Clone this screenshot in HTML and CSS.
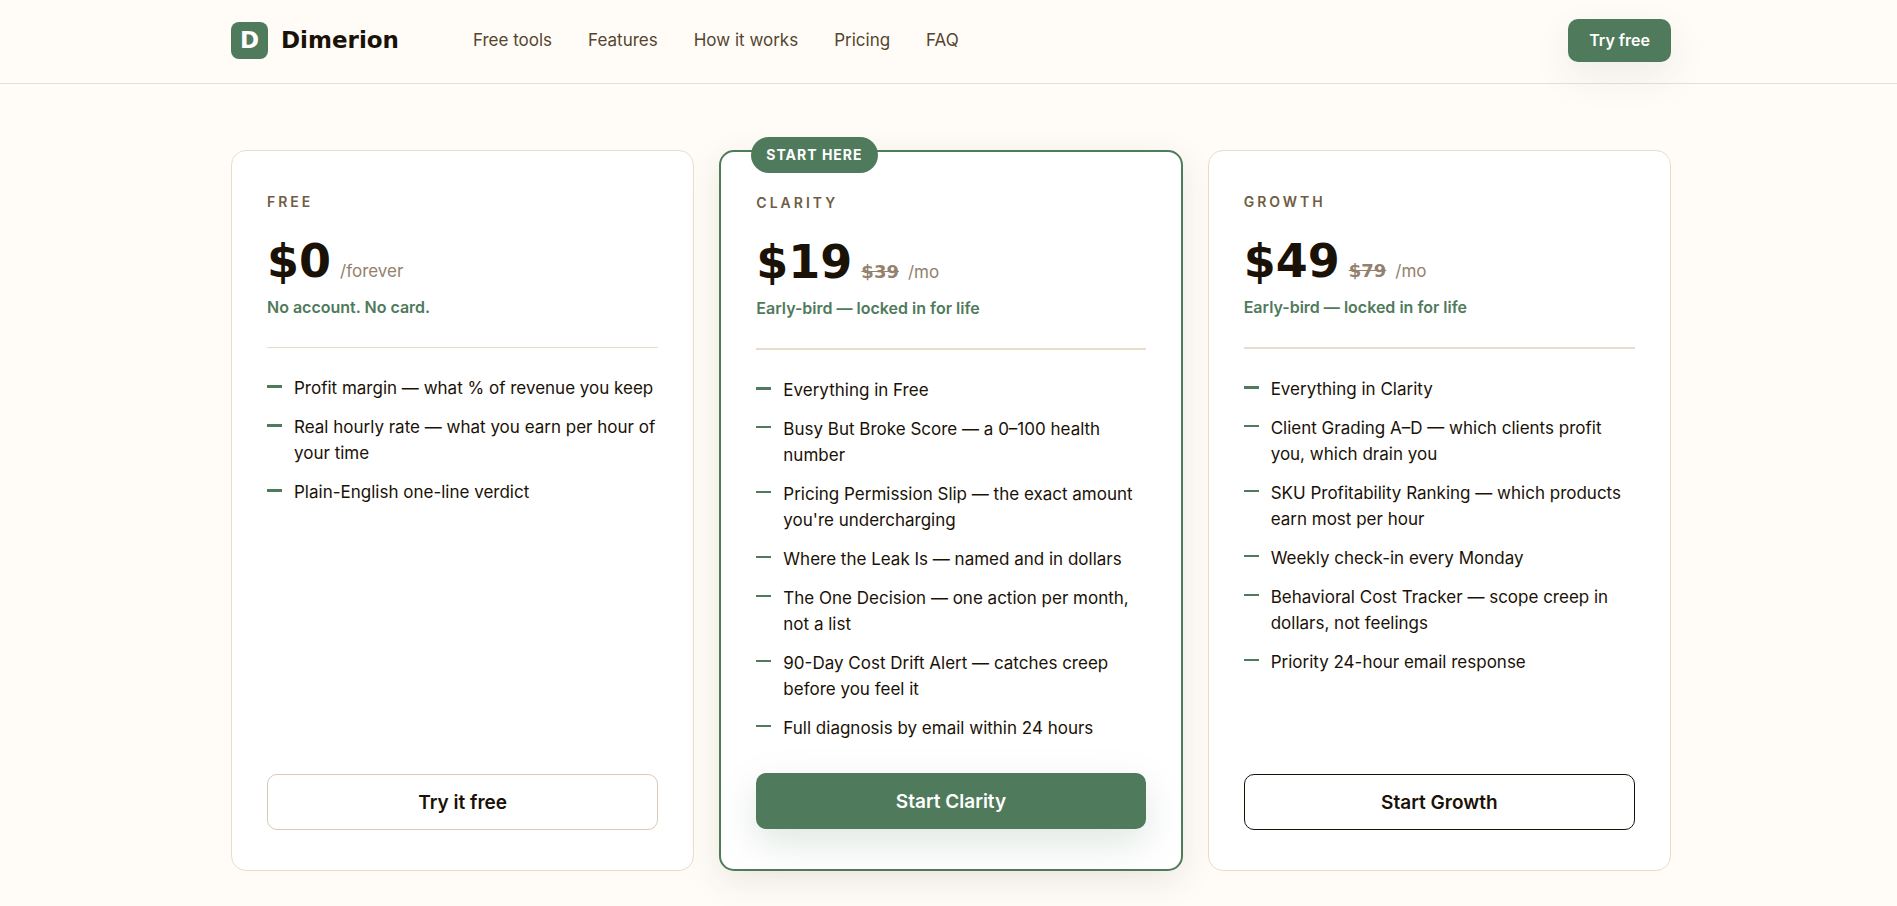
FILE: index.html
```html
<!DOCTYPE html>
<html lang="en">
<head>
    <meta charset="UTF-8">
    <meta name="viewport" content="width=device-width, initial-scale=1.0">
    <title>Dimerion - Pricing</title>
    <link rel="stylesheet" href="styles.css">
</head>
<body>
    <header class="header">
        <div class="container header-inner">
            <a class="logo" href="#">
                <span class="logo-mark" aria-hidden="true">D</span>
                <span class="logo-name">Dimerion</span>
            </a>
            <nav class="nav">
                <a href="#tools">Free tools</a>
                <a href="#features">Features</a>
                <a href="#how">How it works</a>
                <a href="#pricing">Pricing</a>
                <a href="#faq">FAQ</a>
            </nav>
            <button class="btn btn-small btn-primary">Try free</button>
        </div>
    </header>

    <main class="pricing" id="pricing">
        <div class="container plans">
            <section class="plan plan-free">
                <h2 class="plan-name">Free</h2>
                <p class="price"><span class="amount">$0</span><span class="period">/forever</span></p>
                <p class="note">No account. No card.</p>
                <ul class="features">
                    <li>Profit margin — what % of revenue you keep</li>
                    <li>Real hourly rate — what you earn per hour of your time</li>
                    <li>Plain-English one-line verdict</li>
                </ul>
                <button class="btn btn-light">Try it free</button>
            </section>

            <section class="plan plan-featured">
                <span class="badge">Start here</span>
                <h2 class="plan-name">Clarity</h2>
                <p class="price"><span class="amount">$19</span><s class="old">$39</s><span class="period">/mo</span></p>
                <p class="note">Early-bird — locked in for life</p>
                <ul class="features">
                    <li>Everything in Free</li>
                    <li>Busy But Broke Score — a 0–100 health number</li>
                    <li>Pricing Permission Slip — the exact amount you're undercharging</li>
                    <li>Where the Leak Is — named and in dollars</li>
                    <li>The One Decision — one action per month, not a list</li>
                    <li>90-Day Cost Drift Alert — catches creep before you feel it</li>
                    <li>Full diagnosis by email within 24 hours</li>
                </ul>
                <button class="btn btn-primary">Start Clarity</button>
            </section>

            <section class="plan">
                <h2 class="plan-name">Growth</h2>
                <p class="price"><span class="amount">$49</span><s class="old">$79</s><span class="period">/mo</span></p>
                <p class="note">Early-bird — locked in for life</p>
                <ul class="features">
                    <li>Everything in Clarity</li>
                    <li>Client Grading A–D — which clients profit you, which drain you</li>
                    <li>SKU Profitability Ranking — which products earn most per hour</li>
                    <li>Weekly check-in every Monday</li>
                    <li>Behavioral Cost Tracker — scope creep in dollars, not feelings</li>
                    <li>Priority 24-hour email response</li>
                </ul>
                <button class="btn btn-dark">Start Growth</button>
            </section>
        </div>
    </main>
</body>
</html>
```

FILE: styles.css
```css
:root {
    --green: #4f7a5b;
    --ink: #1a1207;
    --brown: #54452f;
    --muted: #93816c;
    --line: #e9dccb;
    --bg: #fffcf7;
    --wide: "DejaVu Sans", sans-serif;
}
* {
    box-sizing: border-box;
}
body {
    margin: 0;
    background: var(--bg);
    color: var(--ink);
    font-family: Inter, "Liberation Sans", sans-serif;
    font-size: 17px;
    line-height: 26px;
}
h2, p, ul {
    margin: 0;
    padding: 0;
}
.container {
    max-width: 1440px;
    margin: 0 auto;
}

/* header */
.header {
    padding: 0 24px 0 29px;
    border-bottom: 1px solid #e5e0d4;
}
.header-inner {
    display: flex;
    align-items: center;
    height: 83px;
    padding-bottom: 3px;
}
.logo {
    display: flex;
    align-items: center;
    gap: 13px;
    color: var(--ink);
    text-decoration: none;
}
.logo-mark {
    display: flex;
    align-items: center;
    justify-content: center;
    width: 37px;
    height: 37px;
    border-radius: 8px;
    background: var(--green);
    color: #fff;
    font: bold 23px/36px var(--wide);
}
.logo-name {
    font: bold 23px/28px var(--wide);
}
.nav {
    display: flex;
    gap: 36px;
    margin-left: 74px;
    margin-right: auto;
}
.nav a {
    color: var(--brown);
    text-decoration: none;
}

/* buttons */
.btn {
    height: 56px;
    border: 1px solid transparent;
    border-radius: 10px;
    background: #fff;
    color: var(--ink);
    font-family: inherit;
    font-size: 19px;
    font-weight: 600;
    cursor: pointer;
}
.btn-light {
    border-color: #d8cbb5;
}
.btn-dark {
    border-color: var(--ink);
}
.btn-primary {
    border: none;
    background: var(--green);
    color: #fff;
    box-shadow: 0 14px 38px rgba(79, 122, 91, 0.18);
}
.btn-small {
    height: 43px;
    padding: 0 21px;
    font-size: 16px;
    box-shadow: 0 14px 38px rgba(40, 50, 40, 0.08);
}

/* plans */
.pricing {
    padding: 66px 24px 35px 29px;
}
.plans {
    display: grid;
    grid-template-columns: repeat(3, 1fr);
    gap: 25px;
}
.plan {
    position: relative;
    display: flex;
    flex-direction: column;
    padding: 40px 35px;
    border: 1px solid var(--line);
    border-radius: 15px;
    background: #fff;
}
.plan-featured {
    border: 2px solid var(--green);
    box-shadow: 0 10px 34px rgba(60, 35, 15, 0.1);
}
.badge {
    position: absolute;
    top: -15px;
    left: 30px;
    padding: 0 15px;
    border-radius: 18px;
    background: var(--green);
    color: #fff;
    font-size: 14px;
    font-weight: 700;
    line-height: 36px;
    letter-spacing: 1px;
    text-transform: uppercase;
}
.plan-name {
    margin-bottom: 26px;
    color: #6f5d43;
    font-size: 14px;
    font-weight: 600;
    line-height: 22px;
    letter-spacing: 3px;
    text-transform: uppercase;
}
.price {
    display: flex;
    align-items: baseline;
    height: 44px;
    gap: 9px;
    margin-bottom: 12px;
    color: var(--muted);
    line-height: 44px;
}
.amount {
    color: var(--ink);
    font: bold 46px/44px var(--wide);
}
.old {
    font: bold 18px/24px var(--wide);
}
.note {
    padding-bottom: 28px;
    border-bottom: 2px solid var(--line);
    color: var(--green);
    font-size: 16px;
    font-weight: 600;
    line-height: 24px;
}
.plan-free .note {
    border-bottom-width: 1px;
}
.features {
    display: flex;
    flex: 1;
    flex-direction: column;
    gap: 13px;
    margin: 27px 0 32px;
    list-style: none;
}
.features li {
    display: flex;
    gap: 12px;
}
.features li::before {
    content: "";
    flex: none;
    width: 15px;
    height: 2px;
    margin-top: 10px;
    background: var(--green);
}
.plan-free li::before,
.features li:first-child::before {
    height: 3px;
}
```
